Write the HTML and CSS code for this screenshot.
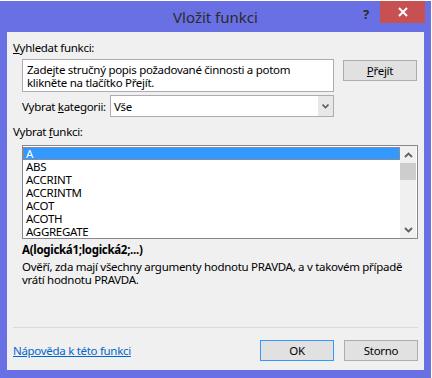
FILE: index.html
```html
<!DOCTYPE html>
<html>
<head>
<meta charset="utf-8">
<link rel="stylesheet" href="styles.css">
</head>
<body>
<div class="window">
  <div class="titlebar">
    <div class="title">Vložit funkci</div>
    <div class="help">?</div>
    <div class="close">
      <svg width="10" height="10" viewBox="0 0 10 10"><path d="M1 1L9 9M9 1L1 9" stroke="#fff" stroke-width="2"/></svg>
    </div>
  </div>
  <div class="client">
    <div class="lbl top"><u>V</u>yhledat funkci:</div>
    <div class="search-row">
      <div class="search">Zadejte stručný popis požadované činnosti a potom klikněte na tlačítko Přejít.</div>
      <div class="btn go"><u>P</u>řejít</div>
    </div>
    <div class="cat-row">
      <div class="cat-lbl">Vybrat <u>k</u>ategorii:</div>
      <div class="select">
        <span class="sel-text">Vše</span>
        <span class="sel-arrow"><svg width="7" height="5" viewBox="0 0 7 5"><path d="M0.5 0.5L3.5 3.5L6.5 0.5" fill="none" stroke="#606060" stroke-width="1.6"/></svg></span>
      </div>
    </div>
    <div class="lbl fn">Vybrat <u>f</u>unkci:</div>
    <div class="listbox">
      <div class="items">
        <div class="item sel">A</div>
        <div class="item">ABS</div>
        <div class="item">ACCRINT</div>
        <div class="item">ACCRINTM</div>
        <div class="item">ACOT</div>
        <div class="item">ACOTH</div>
        <div class="item">AGGREGATE</div>
      </div>
      <div class="scroll">
        <div class="arr up"><svg width="9" height="6" viewBox="0 0 9 6"><path d="M1 5L4.5 1.5L8 5" fill="none" stroke="#606060" stroke-width="1.8"/></svg></div>
        <div class="thumb"></div>
        <div class="arr down"><svg width="9" height="6" viewBox="0 0 9 6"><path d="M1 1L4.5 4.5L8 1" fill="none" stroke="#606060" stroke-width="1.8"/></svg></div>
      </div>
    </div>
    <div class="syntax">A(logická1;logická2;...)</div>
    <div class="desc">Ověří, zda mají všechny argumenty hodnotu PRAVDA, a v takovém případě vrátí hodnotu PRAVDA.</div>
    <div class="sep"></div>
    <div class="footer">
      <a class="link">Nápověda k této funkci</a>
      <div class="btn ok">OK</div>
      <div class="btn cancel">Storno</div>
    </div>
  </div>
</div>
</body>
</html>
```
FILE: styles.css
```css
html, body {
  margin: 0;
  padding: 0;
  background: #ffffff;
}
body {
  font-family: "Noto Sans", "Open Sans", sans-serif;
  font-size: 11.5px;
  letter-spacing: -0.3px;
  color: #000;
}
u { text-decoration: underline; text-underline-offset: 1px; }
.window {
  margin-top: 1px;
  width: 417px;
  height: 375px;
  padding: 0 7px 6px 7px;
  background: #6970e3;
}
.titlebar {
  position: relative;
  height: 31px;
}
.title {
  text-align: center;
  line-height: 31px;
  font-size: 15px;
  letter-spacing: 0;
  color: #2b2b2b;
  padding-top: 1px;
}
.help {
  position: absolute;
  left: 356px;
  top: 4px;
  font-weight: bold;
  font-size: 13px;
  color: #2b2b2b;
}
.close {
  position: absolute;
  left: 373px;
  top: 0;
  width: 45px;
  height: 22px;
  background: #c75050;
  display: flex;
  align-items: center;
  justify-content: center;
}
.client {
  background: #f0f0f0;
  height: 338px;
  padding: 0 6px;
}
.lbl {
  line-height: 15px;
  height: 15px;
  white-space: nowrap;
}
.lbl.top { padding-top: 8px; }
.search-row {
  display: flex;
  margin-top: 4px;
  margin-left: 9px;
  gap: 9px;
  align-items: flex-start;
}
.search {
  box-sizing: border-box;
  width: 312px;
  height: 33px;
  border: 1px solid #abadb3;
  background: #fff;
  padding: 3px 4px 0 4px;
  line-height: 13px;
}
.btn {
  box-sizing: border-box;
  width: 74px;
  height: 21px;
  border: 1px solid #adadad;
  background: #e1e1e1;
  display: flex;
  align-items: center;
  justify-content: center;
}
.btn.go { margin-top: 1px; }
.cat-row {
  display: flex;
  align-items: center;
  margin-top: 3px;
  margin-left: 9px;
}
.cat-lbl { width: 88px; white-space: nowrap; }
.select {
  box-sizing: border-box;
  width: 224px;
  height: 22px;
  border: 1px solid #abadb3;
  background: #fff;
  display: flex;
  align-items: center;
  justify-content: space-between;
}
.sel-text { padding-left: 3px; }
.sel-arrow {
  width: 15px;
  height: 20px;
  background: #e8e8e8;
  display: flex;
  align-items: center;
  justify-content: center;
}
.lbl.fn { margin-top: 7px; }
.listbox {
  box-sizing: border-box;
  margin-top: 6px;
  margin-left: 9px;
  width: 396px;
  height: 94px;
  border: 1px solid #828790;
  background: #fff;
  display: flex;
  overflow: hidden;
}
.items {
  flex: 1;
  padding: 1px 0 0 0;
}
.item {
  height: 13px;
  line-height: 13px;
  padding-left: 3px;
}
.item.sel {
  background: #3399ff;
  color: #fff;
  outline: 1px dotted #d08040;
  outline-offset: -1px;
}
.scroll {
  width: 16px;
  margin: 0 1px 0 0;
  background: #f0f0f0;
  position: relative;
}
.arr {
  height: 17px;
  display: flex;
  align-items: center;
  justify-content: center;
}
.arr.down {
  position: absolute;
  bottom: 0;
  left: 0;
  right: 0;
}
.thumb {
  height: 17px;
  background: #cdcdcd;
}
.syntax {
  margin-top: 3px;
  margin-left: 9px;
  font-weight: bold;
  line-height: 15px;
}
.desc {
  margin-top: 3px;
  margin-left: 9px;
  line-height: 13px;
  width: 396px;
}
.sep {
  margin-top: 41px;
  height: 1px;
  background: #dadada;
}
.footer {
  display: flex;
  align-items: center;
  margin-top: 12px;
  height: 21px;
}
.link {
  color: #0066cc;
  text-decoration: underline;
  flex: 1;
}
.btn.ok {
  border-color: #3399ff;
  margin-right: 10px;
}
```
